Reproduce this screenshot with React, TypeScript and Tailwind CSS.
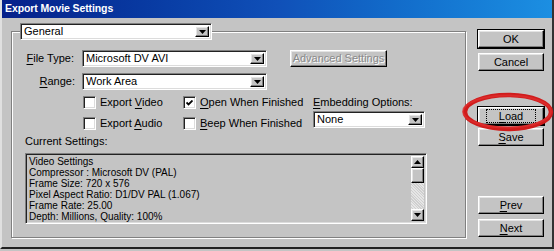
import type { ReactNode } from "react"

const raised =
	"border border-t-white border-l-white border-r-black border-b-black shadow-[inset_-1px_-1px_0_#808080,inset_1px_1px_0_#e4e4e4]"
const sunken =
	"border border-t-[#808080] border-l-[#808080] border-r-white border-b-white shadow-[inset_1px_1px_0_#222,inset_-1px_-1px_0_#dcdcdc]"

function U({ children }: { children: ReactNode }) {
	return <span className="underline underline-offset-2">{children}</span>
}

function DownArrow() {
	return (
		<svg width="7" height="4" viewBox="0 0 7 4" aria-hidden="true">
			<path d="M0 0h7L3.5 4z" fill="#000" />
		</svg>
	)
}

function UpArrow() {
	return (
		<svg width="7" height="4" viewBox="0 0 7 4" aria-hidden="true">
			<path d="M0 4h7L3.5 0z" fill="#000" />
		</svg>
	)
}

function Select({ value, width }: { value: string; width: string }) {
	return (
		<div className={`${width} h-[17px] flex bg-white ${sunken} p-[2px]`}>
			<div className="flex-1 pl-[1px] leading-[11px] text-[11px] text-black">{value}</div>
			<div className={`w-[14px] h-full flex items-center justify-center bg-[#c4c4c4] ${raised}`}>
				<DownArrow />
			</div>
		</div>
	)
}

function Checkbox({ checked, label }: { checked?: boolean; label: ReactNode }) {
	return (
		<div className="flex items-center gap-[4px] h-[13px]">
			<div className={`w-[13px] h-[13px] bg-white ${sunken} flex items-center justify-center`}>
				{checked && (
					<svg width="7" height="6" viewBox="0 0 7 6" aria-hidden="true">
						<path d="M0.5 2.5l2 2 4-4" stroke="#000" strokeWidth="1.8" fill="none" />
					</svg>
				)}
			</div>
			<span className="text-[11px] leading-[13px]">{label}</span>
		</div>
	)
}

function Button({
	children,
	isDefault,
	focused,
}: {
	children: ReactNode
	isDefault?: boolean
	focused?: boolean
}) {
	return (
		<div
			className={`w-[66px] h-[18px] bg-[#c4c4c4] flex items-center justify-center text-[11px] ${
				isDefault ? "outline outline-1 outline-black" : ""
			} ${raised}`}
		>
			<span
				className={`px-[12px] leading-[12px] ${focused ? "border border-dotted border-black" : "border border-transparent"}`}
			>
				{children}
			</span>
		</div>
	)
}

export default function App() {
	const lines = [
		"Video Settings",
		"Compressor : Microsoft DV (PAL)",
		"Frame Size: 720 x 576",
		"Pixel Aspect Ratio: D1/DV PAL (1.067)",
		"Frame Rate: 25.00",
		"Depth: Millions, Quality: 100%",
	]

	return (
		<div className="w-[554px] h-[251px] bg-[#c4c4c4] overflow-hidden relative font-['Liberation_Sans',Arial,sans-serif] text-black">
			<div className="h-[249px] border-l-2 border-l-[#e0e0e0] border-r-2 border-r-[#333] border-b-2 border-b-[#222] flex flex-col">
				{/* Title bar */}
				<div className="h-[18px] bg-gradient-to-r from-[#06208a] via-[#1050b8] to-[#1c8fe2] flex items-center pl-[3px]">
					<span className="text-white font-bold text-[10.5px] tracking-[-0.1px]">Export Movie Settings</span>
				</div>

				<div className="flex pt-[5px]">
					{/* Group box */}
					<fieldset className="ml-[9px] w-[455px] h-[215px] border border-[#808080] shadow-[inset_1px_1px_0_#fff,1px_1px_0_#fff] pl-[8px] pr-0 pb-0 text-[11px]">
						<legend className="p-0">
							<Select value="General" width="w-[192px]" />
						</legend>

						<div className="mt-[10px] flex items-center">
							<div className="w-[54px] text-right leading-[17px]">
								<U>F</U>ile Type:
							</div>
							<div className="ml-[8px]">
								<Select value="Microsoft DV AVI" width="w-[185px]" />
							</div>
							<div
								className={`ml-[23px] w-[97px] h-[17px] flex items-center justify-center ${raised} text-[#8a8a8a] [text-shadow:1px_1px_0_#fff] text-[11px]`}
							>
								Advanced Settings
							</div>
						</div>

						<div className="mt-[6px] flex items-center">
							<div className="w-[55px] text-right leading-[17px]">
								<U>R</U>ange:
							</div>
							<div className="ml-[7px]">
								<Select value="Work Area" width="w-[185px]" />
							</div>
						</div>

						<div className="flex mt-[5px]">
							<div className="ml-[63px] w-[100px] flex flex-col gap-[8px] pt-[1px]">
								<Checkbox
									label={
										<>
											Export <U>V</U>ideo
										</>
									}
								/>
								<Checkbox
									label={
										<>
											Export <U>A</U>udio
										</>
									}
								/>
							</div>
							<div className="w-[130px] flex flex-col gap-[8px] pt-[1px]">
								<Checkbox
									checked
									label={
										<>
											<U>O</U>pen When Finished
										</>
									}
								/>
								<Checkbox
									label={
										<>
											<U>B</U>eep When Finished
										</>
									}
								/>
							</div>
							<div className="flex flex-col">
								<div className="leading-[13px] pt-[1px]">
									<U>E</U>mbedding Options:
								</div>
								<div className="mt-[2px]">
									<Select value="None" width="w-[112px]" />
								</div>
							</div>
						</div>

						<div className="mt-[5px] ml-[5px] leading-[13px]">Current Settings:</div>

						<div className={`mt-[5px] ml-[5px] w-[402px] h-[71px] ${sunken} flex p-[2px]`}>
							<div className="flex-1 pl-[1px] text-[10px] leading-[11px]">
								{lines.map((l) => (
									<div key={l} className="whitespace-nowrap">
										{l}
									</div>
								))}
							</div>
							<div className="w-[13px] h-full flex flex-col bg-[#e2e2e2]">
								<div className={`h-[12px] bg-[#c4c4c4] flex items-center justify-center ${raised}`}>
									<UpArrow />
								</div>
								<div className={`h-[15px] bg-[#c4c4c4] ${raised}`} />
								<div className="flex-1 bg-[repeating-linear-gradient(45deg,#e6e6e6_0px,#e6e6e6_1px,#cfcfcf_1px,#cfcfcf_2px)]" />
								<div className={`h-[12px] bg-[#c4c4c4] flex items-center justify-center ${raised}`}>
									<DownArrow />
								</div>
							</div>
						</div>
					</fieldset>

					{/* Right-hand buttons */}
					<div className="ml-[12px] pt-[7px] flex flex-col">
						<Button isDefault>OK</Button>
						<div className="mt-[5px]">
							<Button>Cancel</Button>
						</div>
						<div className="mt-[36px]">
							<Button isDefault focused>
								<U>L</U>oad
							</Button>
						</div>
						<div className="mt-[3px]">
							<Button>
								<U>S</U>ave
							</Button>
						</div>
						<div className="mt-[50px]">
							<Button>
								<U>P</U>rev
							</Button>
						</div>
						<div className="mt-[5px]">
							<Button>
								<U>N</U>ext
							</Button>
						</div>
					</div>
				</div>
			</div>

			{/* Red marker ellipse drawn over the Load button */}
			<svg className="absolute left-[460px] top-[90px] pointer-events-none" width="94" height="44" viewBox="0 0 94 44" aria-hidden="true">
				<ellipse cx="48" cy="22" rx="43" ry="17" fill="none" stroke="#d01c1c" strokeWidth="4.5" />
				<ellipse cx="47" cy="21.5" rx="44" ry="16" fill="none" stroke="#e03030" strokeWidth="2" opacity="0.7" />
			</svg>
		</div>
	)
}
